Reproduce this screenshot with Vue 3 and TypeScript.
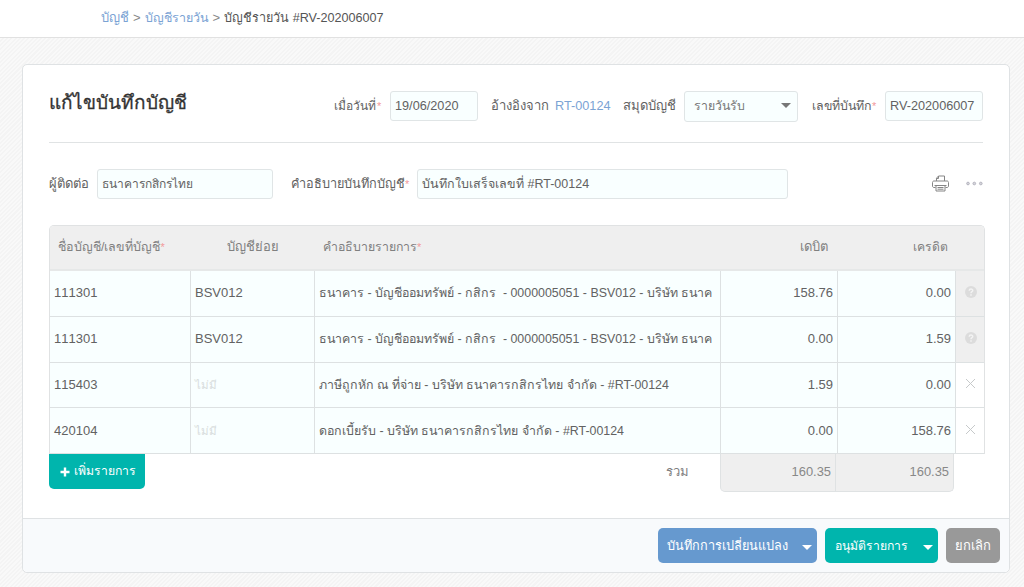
<script setup lang="ts">
interface Entry {
  code: string
  sub: string
  detail: string
  debit: string
  credit: string
  locked: boolean
}

const entries: Entry[] = [
  { code: '111301', sub: 'BSV012', detail: 'ธนาคาร - บัญชีออมทรัพย์ - กสิกร  - 0000005051 - BSV012 - บริษัท ธนาค', debit: '158.76', credit: '0.00', locked: true },
  { code: '111301', sub: 'BSV012', detail: 'ธนาคาร - บัญชีออมทรัพย์ - กสิกร  - 0000005051 - BSV012 - บริษัท ธนาค', debit: '0.00', credit: '1.59', locked: true },
  { code: '115403', sub: '', detail: 'ภาษีถูกหัก ณ ที่จ่าย - บริษัท ธนาคารกสิกรไทย จำกัด - #RT-00124', debit: '1.59', credit: '0.00', locked: false },
  { code: '420104', sub: '', detail: 'ดอกเบี้ยรับ - บริษัท ธนาคารกสิกรไทย จำกัด - #RT-00124', debit: '0.00', credit: '158.76', locked: false },
]
</script>

<template>
  <div class="page">
    <nav class="crumbs">
      <a>บัญชี</a><i>&gt;</i><a class="c2">บัญชีรายวัน</a><i>&gt;</i><span class="c3">บัญชีรายวัน #RV-202006007</span>
    </nav>

    <main class="card">
      <div class="body">
        <header class="head">
          <h1>แก้ไขบันทึกบัญชี</h1>
          <label><span class="l-date">เมื่อวันที่</span><em>*</em></label>
          <div class="field">19/06/2020</div>
          <label class="gap12">อ้างอิงจาก</label>
          <a class="ref">RT-00124</a>
          <label>สมุดบัญชี</label>
          <div class="field select"><span class="l-sel">รายวันรับ</span><b class="caret"></b></div>
          <label class="gap14"><span class="l-no">เลขที่บันทึก</span><em>*</em></label>
          <div class="field">RV-202006007</div>
        </header>

        <section class="info">
          <label>ผู้ติดต่อ</label>
          <div class="field"><span class="l-bank">ธนาคารกสิกรไทย</span></div>
          <label class="gap18"><span class="l-desc">คำอธิบายบันทึกบัญชี</span><em>*</em></label>
          <div class="field"><span class="l-rcpt">บันทึกใบเสร็จเลขที่ #RT-00124</span></div>
          <div class="tools">
            <svg width="17" height="17" viewBox="0 0 17 17" fill="none" stroke="#858585" stroke-width="1">
              <path d="M4.500 6V3.200L6.500 1h6v5M4.500 3.500h2V1" />
              <path d="M3.500 12.500H2c-.9 0-1.500-.6-1.500-1.500V7.500c0-.9.6-1.500 1.500-1.500h13c.9 0 1.500.6 1.500 1.500v3.500c0 .9-.6 1.500-1.500 1.500h-1.500" />
              <path d="M2.500 10.500h12M4 10.500v5.500h9v-5.500M5.500 12.500h6M5.500 14.200h6" />
            </svg>
            <svg class="dots" width="17" height="5" viewBox="0 0 17 5" fill="#d6d5dc" stroke="#aaa9b5" stroke-width=".8">
              <circle cx="2" cy="2.500" r="1.350" /><circle cx="8.300" cy="2.500" r="1.350" /><circle cx="14.800" cy="2.500" r="1.350" />
            </svg>
          </div>
        </section>

        <section class="table">
          <div class="row thead">
            <div class="h-a"><span>ชื่อบัญชี/เลขที่บัญชี</span><em>*</em></div>
            <div class="h-b"><span>บัญชีย่อย</span></div>
            <div class="h-c"><span>คำอธิบายรายการ</span><em>*</em></div>
            <div class="h-d"><span>เดบิต</span></div>
            <div class="h-e"><span>เครดิต</span></div>
            <div></div>
          </div>
          <div v-for="(e, i) in entries" :key="i" class="row">
            <div class="cell code">{{ e.code }}</div>
            <div class="cell"><template v-if="e.sub">{{ e.sub }}</template><span v-else class="none">ไม่มี</span></div>
            <div class="cell detail"><span>{{ e.detail }}</span></div>
            <div class="cell num">{{ e.debit }}</div>
            <div class="cell num">{{ e.credit }}</div>
            <div class="cell act" :class="{ locked: e.locked }">
              <svg v-if="e.locked" width="12" height="12" viewBox="0 0 12 12">
                <circle cx="6" cy="6" r="6" fill="#dcdcdc" />
                <path d="M4.200 4.700C4.300 2.500 7.900 2.600 7.700 4.700 7.600 5.800 6 5.700 6 7.200M6 8.200v1.500" fill="none" stroke="#f3f3f3" stroke-width="1.500" />
              </svg>
              <svg v-else width="11" height="11" viewBox="0 0 11 11"><path d="M1 1l9 9M10 1l-9 9" stroke="#c6c9ca" fill="none" /></svg>
            </div>
          </div>
        </section>

        <section class="totals">
          <button class="btn teal add">
            <svg width="10" height="10" viewBox="0 0 10 10"><path d="M5 .5v9M.5 5h9" stroke="#fff" stroke-width="2.400" /></svg>
            <span>เพิ่มรายการ</span>
          </button>
          <div class="sum-label">รวม</div>
          <div class="sum first">160.35</div>
          <div class="sum last">160.35</div>
        </section>
      </div>

      <footer class="foot">
        <button class="btn blue"><span>บันทึกการเปลี่ยนแปลง</span><b class="caret"></b></button>
        <button class="btn teal approve"><span>อนุมัติรายการ</span><b class="caret"></b></button>
        <button class="btn gray"><span>ยกเลิก</span></button>
      </footer>
    </main>
  </div>
</template>

<style>
body { background: #f7f7f7; overflow: hidden; }
</style>

<style scoped>
* { box-sizing: border-box; }
.page {
  width: 1024px;
  height: 587px;
  overflow: hidden;
  font: 13px/18px "Liberation Sans", Arial, sans-serif;
  color: #626262;
  white-space: pre;
  background: repeating-linear-gradient(135deg, #f9f9f9 0 1.500px, #f4f4f4 1.500px 3px);
}
.crumbs {
  display: flex;
  align-items: center;
  height: 38px;
  padding: 0 0 2px 101px;
  background: #fff;
  border-bottom: 1px solid #e1e1e1;
}
.crumbs a, .ref { color: #7ba3d4; }
.ref { font-size: 12.700px; }
.crumbs i { font-style: normal; color: #888; padding: 0 4px; }
.crumbs .c2 { font-size: 12.500px; }
.c3 { font-size: 12.600px; color: #555; }
.card {
  display: flex;
  flex-direction: column;
  width: 988px;
  height: 509px;
  margin: 26px 0 0 22px;
  background: #fff;
  border: 1px solid #dfe2e4;
  border-radius: 5px;
}
.body { flex: 1; padding: 0 24px 0 26px; }
.head {
  display: grid;
  grid-template-columns: 284px 57px 88px 77px 68px 61px 114px 87px 98px;
  align-items: center;
  width: 934px;
  height: 78px;
  padding-top: 5px;
  border-bottom: 1px solid #e0e3e4;
}
h1 {
  margin: 0;
  padding-bottom: 6px;
  font-size: 19px;
  line-height: 28px;
  font-weight: 400;
  color: #333;
  -webkit-text-stroke: .3px #333;
}
em { font-style: normal; color: #f29a9a; font-size: 11px; }
.l-date { font-size: 12px; margin-left: 1px; }
.l-date + em { margin-left: 1px; }
.l-sel { font-size: 12.300px; }
.l-no { font-size: 12.400px; }
.l-bank { font-size: 12px; }
.l-desc { font-size: 12.700px; }
.l-rcpt { font-size: 12.500px; }
.gap12 { padding-left: 13px; }
.gap14 { padding-left: 14px; }
.gap18 { padding-left: 18px; }
.field {
  display: flex;
  align-items: center;
  height: 30px;
  padding: 0 4px 1px;
  font-size: 12.700px;
  background: #f9ffff;
  border: 1px solid #e0e5e6;
  border-radius: 3px;
}
.select { justify-content: space-between; padding: 0 6px 1px 9px; color: #777; height: 31px; }
.caret { border: 5px solid transparent; border-top-color: #777; border-bottom: 0; }
.info {
  display: grid;
  grid-template-columns: 48px 176px 144px 371px 195px;
  align-items: center;
  width: 934px;
  height: 82px;
}
.tools { display: flex; justify-content: flex-end; align-items: center; gap: 17px; padding-bottom: 2px; }
.table { width: 936px; border: 1px solid #e0e2e3; border-bottom: 0; border-radius: 5px 5px 0 0; overflow: hidden; }
.row { display: grid; grid-template-columns: 141px 124px 406px 117px 118px 28px; height: 45.800px; }
.thead { height: 45px; padding-bottom: 2px; background: #efefef; border-bottom: 2px solid #e6e8e8; align-items: center; color: #808080; }
.h-a { padding-left: 8px; font-size: 12.500px; }
.h-b { padding-left: 36px; }
.h-c { padding-left: 8px; font-size: 12.350px; }
.h-d { padding-left: 79px; }
.h-e { padding-left: 75px; font-size: 12.200px; }
.cell {
  display: flex;
  align-items: center;
  padding: 0 4px;
  overflow: hidden;
  background: #f9ffff;
  border-right: 1px solid #dde1e2;
  border-bottom: 1px solid #dde1e2;
}
.code { font-kerning: none; }
.detail { font-size: 12.400px; }
.num { justify-content: flex-end; }
.none { color: #d8dddd; font-size: 11.500px; }
.act { justify-content: center; background: #fff; border-right: 0; padding: 0 0 2px 1px; }
.act.locked { background: #efefef; }
.totals { display: grid; grid-template-columns: 96px 574.500px 116.500px 118px; }
.btn {
  display: flex;
  align-items: center;
  border: 0;
  padding: 0;
  color: #fff;
  font: inherit;
  border-radius: 5px;
  height: 35px;
}
.teal { background: #00b5ad; }
.blue { background: #6699cf; }
.gray { background: #999; }
.add { border-radius: 0 0 5px 5px; padding-left: 11px; gap: 4px; font-size: 12.200px; }
.add span { padding-bottom: 2px; }
.sum-label { padding: 9px 0 0 521px; color: #808080; }
.sum { height: 38px; padding: 9px 4px 0 0; text-align: right; font-size: 12.900px; color: #888; background: #efefef; border: 1px solid #dfe2e3; border-top: 0; }
.first { border-radius: 0 0 0 5px; }
.last { border-left: 0; border-radius: 0 0 5px 0; }
.foot {
  display: flex;
  justify-content: flex-end;
  align-items: center;
  gap: 8px;
  height: 54px;
  padding-right: 9px;
  background: #f8fafc;
  border-top: 1px solid #dfe2e4;
  border-radius: 0 0 5px 5px;
}
.foot .btn { justify-content: space-between; padding: 0 5px 0 9px; }
.foot .caret { border-top-color: #fff; margin-top: 3px; }
.foot .blue { width: 159px; font-size: 12.700px; }
.foot .approve { width: 113px; padding-left: 10px; font-size: 12.200px; }
.foot .gray { width: 54px; padding: 0; justify-content: center; }
</style>
